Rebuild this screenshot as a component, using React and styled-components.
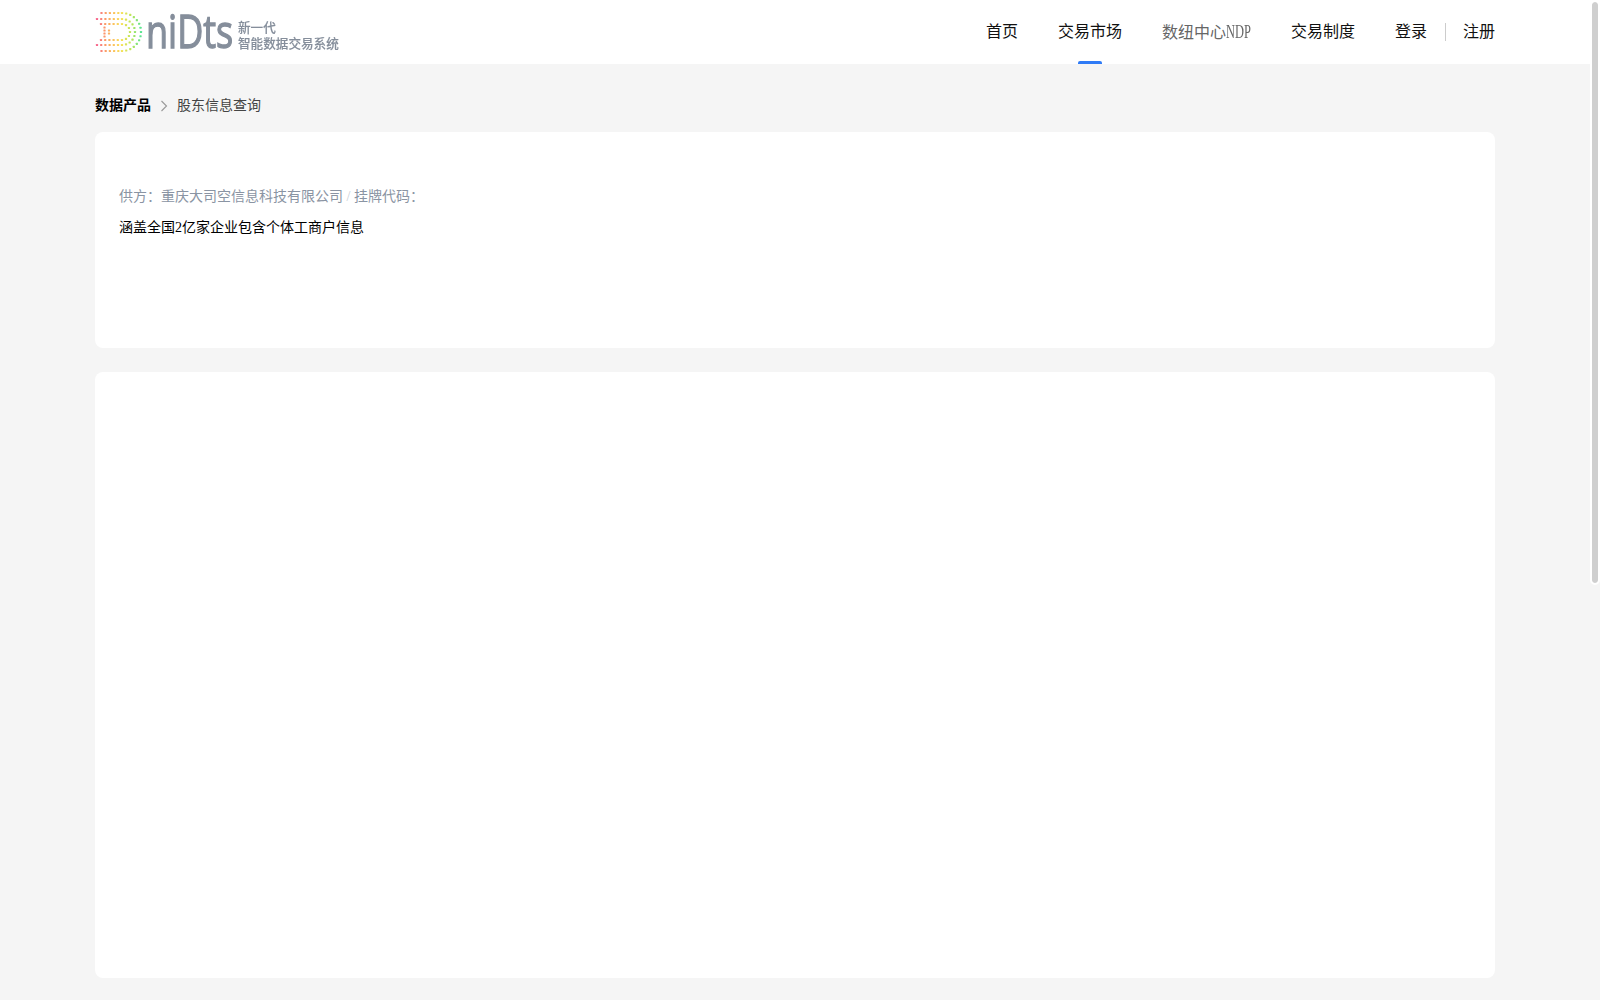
import React from "react";
import styled, { createGlobalStyle } from "styled-components";

const Global = createGlobalStyle`
  html, body { margin: 0; padding: 0; height: 100%; background: #f5f5f5; overflow: hidden; }
  #root { height: 100%; }
  body { font-family: "Liberation Serif", "Noto Sans CJK SC", serif; }
`;

const Shell = styled.div`height: 100vh; padding-right: 10px; box-sizing: border-box; overflow: hidden; background: #f5f5f5;`;
const ScrollThumb = styled.div`
  position: fixed; top: 0; right: 0; width: 10px; height: 585px; box-sizing: border-box;
  background: #cfcfcf; background-clip: padding-box;
  border: 2px solid #fff; border-radius: 5px;
`;
const Header = styled.header`height: 64px; background: #fff; box-shadow: 10px 0 0 #fff;`;
const Inner = styled.div`
  width: 1400px; height: 100%; margin: 0 auto;
  display: flex; align-items: center; justify-content: space-between;
`;
const Brand = styled.a`display: flex; align-items: center; filter: blur(0.3px);`;
const Slogan = styled.span`
  display: flex; flex-direction: column; gap: 1px; margin: 6px 0 0 1px;
  font-family: "Noto Sans CJK SC", sans-serif; font-size: 12.6px; line-height: 14.5px;
  font-weight: 500; color: #858e9b; -webkit-text-stroke: 0.15px #858e9b; white-space: nowrap;
`;
const Nav = styled.nav`display: flex; align-items: center; height: 100%; gap: 40px;`;
const NavItem = styled.a`
  position: relative; height: 64px;
  font-size: 16px; line-height: 64px; white-space: nowrap;
  color: ${p => (p.$muted ? "#666" : "#111")};
  ${p => p.$active && `&::after {
    content: ""; position: absolute; left: 50%; bottom: 0;
    width: 24px; height: 3px; margin-left: -12px;
    background: #2f7bf6; border-radius: 2px 2px 0 0;
  }`}
`;
const Narrow = styled.span`
  display: inline-block; width: 25px; font-size: 18px;
  transform: scaleX(0.69); transform-origin: left center;
`;
const Auth = styled.div`display: flex; align-items: center; height: 100%;`;
const Divider = styled.i`display: block; width: 1px; height: 18px; margin: 0 17px 0 18px; background: #ccc;`;
const Main = styled.main`width: 1400px; margin: 0 auto;`;
const Crumbs = styled.div`
  display: flex; align-items: center; height: 20px; padding: 32px 0 16px;
  font-size: 14px; line-height: 20px; color: #444;
`;
const CrumbRoot = styled.b`color: #000;`;
const Chevron = styled.svg`display: block; width: 8px; height: 12px; margin: 0 9px; flex: none;`;
const Card = styled.section`
  box-sizing: border-box; height: ${p => p.$h}px; margin-bottom: 24px;
  padding: 55px 24px 0;
  background: #fff; border-radius: 8px;
`;
const Meta = styled.div`font-size: 14px; line-height: 20px; color: #8a94a3;`;
const Slash = styled.span`color: #c9ced6;`;
const Desc = styled.div`margin-top: 11px; font-size: 14px; line-height: 20px; color: #000;`;

const stops = [
  [95, [245, 70, 125]], [106, [251, 150, 70]], [120, [248, 220, 60]],
  [131, [170, 225, 60]], [140, [60, 225, 125]],
];
const colorAt = x => {
  let i = 0;
  while (i < stops.length - 2 && x > stops[i + 1][0]) i++;
  const [x0, a] = stops[i];
  const [x1, b] = stops[i + 1];
  const t = Math.min(1, Math.max(0, (x - x0) / (x1 - x0)));
  return `rgb(${a.map((v, k) => Math.round(v + (b[k] - v) * t)).join(",")})`;
};
const ringDots = (startX, r, count) => {
  const cx = 121, cy = 32, out = [];
  for (let x = startX; x < cx; x += 4.2) { out.push([x, cy - r]); out.push([x, cy + r]); }
  for (let i = 0; i <= count; i++) {
    const a = -Math.PI / 2 + (Math.PI * i) / count;
    out.push([cx + r * Math.cos(a), cy + r * Math.sin(a)]);
  }
  return out;
};
const dots = [
  ...ringDots(100.5, 19, 14), ...ringDots(96, 13, 10), ...ringDots(100, 8, 6),
  ...[27, 30, 33, 36].map(y => [103.5, y + 0.5]),
  ...[30, 33].map(y => [108, y + 0.5]),
];

const Mark = styled.svg`display: block; width: 142px; height: 44px; flex: none; overflow: visible;`;
const WordmarkText = styled.text`
  font-family: "Open Sans", sans-serif; font-size: 36px;
  fill: #858e9b; stroke: #858e9b; stroke-width: 1px;
`;

function Logo() {
  return (
    <Mark viewBox="94 10 142 44">
      {dots.map(([x, y], i) => (
        <rect key={i} x={x - 1.1} y={y - 1.1} width="2.2" height="2.2" rx="0.6" fill={colorAt(x)} opacity="0.85" />
      ))}
      <WordmarkText transform="translate(145 48) scale(1 1.28)">niDts</WordmarkText>
    </Mark>
  );
}

export default function App() {
  return (
    <Shell>
      <Global />
      <Header>
        <Inner>
          <Brand>
            <Logo />
            <Slogan><span>新一代</span><span>智能数据交易系统</span></Slogan>
          </Brand>
          <Nav>
            <NavItem>首页</NavItem>
            <NavItem $active>交易市场</NavItem>
            <NavItem $muted>数纽中心<Narrow>NDP</Narrow></NavItem>
            <NavItem>交易制度</NavItem>
            <Auth>
              <NavItem>登录</NavItem>
              <Divider />
              <NavItem>注册</NavItem>
            </Auth>
          </Nav>
        </Inner>
      </Header>
      <Main>
        <Crumbs>
          <CrumbRoot>数据产品</CrumbRoot>
          <Chevron viewBox="0 0 8 12"><path d="M1.5 1 L6.5 6 L1.5 11" fill="none" stroke="#999" strokeWidth="1.1" /></Chevron>
          <span>股东信息查询</span>
        </Crumbs>
        <Card $h={216}>
          <Meta>供方：重庆大司空信息科技有限公司 <Slash>/</Slash> 挂牌代码：</Meta>
          <Desc>涵盖全国2亿家企业包含个体工商户信息</Desc>
        </Card>
        <Card $h={606} />
      </Main>
      <ScrollThumb />
    </Shell>
  );
}
